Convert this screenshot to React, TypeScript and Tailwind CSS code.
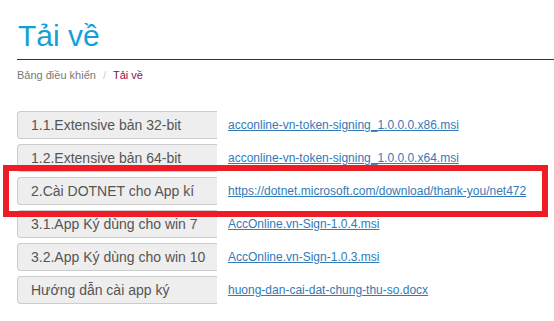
import React from "react";

const rows = [
  { label: "1.1.Extensive bản 32-bit", link: "acconline-vn-token-signing_1.0.0.0.x86.msi" },
  { label: "1.2.Extensive bản 64-bit", link: "acconline-vn-token-signing_1.0.0.0.x64.msi" },
  { label: "2.Cài DOTNET cho App kí", link: "https://dotnet.microsoft.com/download/thank-you/net472" },
  { label: "3.1.App Ký dùng cho win 7", link: "AccOnline.vn-Sign-1.0.4.msi" },
  { label: "3.2.App Ký dùng cho win 10", link: "AccOnline.vn-Sign-1.0.3.msi" },
  { label: "Hướng dẫn cài app ký", link: "huong-dan-cai-dat-chung-thu-so.docx" },
];

export default function App() {
  return (
    <div
      className="relative w-[554px] h-[321px] overflow-hidden bg-white pl-[17px]"
      style={{ fontFamily: '"Liberation Sans", Arial, sans-serif' }}
    >
      <h1 className="pt-[18px] text-[30px] leading-[35px] text-[#139fd8] pl-px">Tải về</h1>
      <div className="mt-[6px] h-px bg-[#333]" />
      <div className="mt-[7px] flex text-[11px] leading-[16px]">
        <span className="text-[#777]">Bảng điều khiển</span>
        <span className="px-[7px] text-[#ccc]">/</span>
        <span className="text-[#8b0f4e]">Tải về</span>
      </div>
      <div className="mt-[28px] flex flex-col gap-[5px]">
        {rows.map((r) => (
          <div key={r.label} className="flex items-center h-[28px]">
            <div className="w-[200px] h-[28px] flex items-center pl-[13px] bg-[#eee] border border-r-0 border-[#ccc] rounded-l-[4px] text-[14px] text-[#555] whitespace-nowrap overflow-hidden">
              {r.label}
            </div>
            <a className="ml-[11px] text-[12px] leading-[16px] text-[#337ab7] underline whitespace-nowrap" href="#">
              {r.link}
            </a>
          </div>
        ))}
      </div>
      <div className="absolute left-[3px] top-[165px] w-[545px] h-[52px] border-[6px] border-[#ee1c25]" />
    </div>
  );
}
